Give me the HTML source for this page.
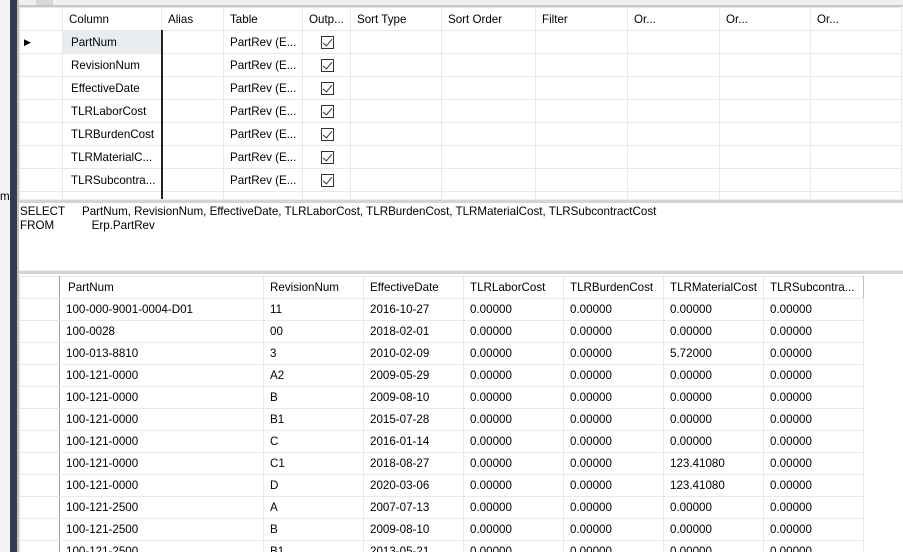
<!DOCTYPE html>
<html style="width:903px;height:552px;overflow:hidden"><head><style>
*{margin:0;padding:0;box-sizing:border-box}
body{width:903px;height:552px;overflow:hidden;background:#fff;font-family:"Liberation Sans",sans-serif;font-size:11.6px;color:#000;position:relative}
.abs{position:absolute}
table{border-collapse:collapse;table-layout:fixed;position:absolute}
td{border:1px solid #e8e8e8;white-space:nowrap;overflow:hidden;padding:0 0 0 6px;vertical-align:middle}
.cb{display:inline-block;width:13px;height:13px;border:1px solid #333;position:relative;margin-left:12px;vertical-align:middle}
.cb:after{content:"";position:absolute;left:3px;top:0px;width:4px;height:8px;border:solid #333;border-width:0 1.5px 1.5px 0;transform:rotate(40deg)}
</style></head><body>
<div class="abs" style="left:0;top:0;width:10px;height:552px;background:#f3f3f3"></div>
<div class="abs" style="left:10px;top:0;width:7px;height:552px;background:#2e3c58"></div>
<div class="abs" style="left:17px;top:0;width:2px;height:552px;background:#bfbfbf"></div>
<div class="abs" style="left:0;top:190px">m</div>
<div class="abs" style="left:19px;top:0;width:884px;height:6px;background:#f0f0f0"></div>
<div class="abs" style="left:36px;top:0;width:17px;height:5px;background:#d8d8d8"></div>
<div class="abs" style="left:19px;top:5px;width:884px;height:2px;background:#c8c8c8"></div>

<div class="abs" style="left:19px;top:7px;width:884px;height:192px;overflow:hidden">
<table style="left:0;top:0">
<colgroup><col style="width:43px"><col style="width:99px"><col style="width:62px"><col style="width:79px"><col style="width:48px"><col style="width:91px"><col style="width:94px"><col style="width:92px"><col style="width:92px"><col style="width:91px"><col style="width:91px"></colgroup>
<tr style="height:23px"><td></td><td>Column</td><td>Alias</td><td>Table</td><td>Outp...</td><td>Sort Type</td><td>Sort Order</td><td>Filter</td><td>Or...</td><td>Or...</td><td>Or...</td></tr>
<tr style="height:23px"><td style="padding-left:4px;font-size:9px">&#9654;</td><td style="background:#e9ecef;border:1px dotted #333;padding-left:8px">PartNum</td><td style="border-left:2px solid #222"></td><td>PartRev (E...</td><td><span class="cb"></span></td><td></td><td></td><td></td><td></td><td></td><td></td></tr>
<tr style="height:23px"><td></td><td style="padding-left:8px">RevisionNum</td><td style="border-left:2px solid #222"></td><td>PartRev (E...</td><td><span class="cb"></span></td><td></td><td></td><td></td><td></td><td></td><td></td></tr>
<tr style="height:23px"><td></td><td style="padding-left:8px">EffectiveDate</td><td style="border-left:2px solid #222"></td><td>PartRev (E...</td><td><span class="cb"></span></td><td></td><td></td><td></td><td></td><td></td><td></td></tr>
<tr style="height:23px"><td></td><td style="padding-left:8px">TLRLaborCost</td><td style="border-left:2px solid #222"></td><td>PartRev (E...</td><td><span class="cb"></span></td><td></td><td></td><td></td><td></td><td></td><td></td></tr>
<tr style="height:23px"><td></td><td style="padding-left:8px">TLRBurdenCost</td><td style="border-left:2px solid #222"></td><td>PartRev (E...</td><td><span class="cb"></span></td><td></td><td></td><td></td><td></td><td></td><td></td></tr>
<tr style="height:23px"><td></td><td style="padding-left:8px">TLRMaterialC...</td><td style="border-left:2px solid #222"></td><td>PartRev (E...</td><td><span class="cb"></span></td><td></td><td></td><td></td><td></td><td></td><td></td></tr>
<tr style="height:23px"><td></td><td style="padding-left:8px">TLRSubcontra...</td><td style="border-left:2px solid #222"></td><td>PartRev (E...</td><td><span class="cb"></span></td><td></td><td></td><td></td><td></td><td></td><td></td></tr>
<tr style="height:23px"><td></td><td></td><td style="border-left:2px solid #222"></td><td></td><td><span class="cb" style="margin-top:14px"></span></td><td></td><td></td><td></td><td></td><td></td><td></td></tr>
</table></div>
<div class="abs" style="left:19px;top:199px;width:884px;height:4px;background:#d4d4d4;border-top:1px solid #ececec"></div>
<div class="abs" style="left:20px;top:205px;line-height:14px">SELECT<br>FROM</div>
<div class="abs" style="left:82px;top:205px;line-height:14px">PartNum, RevisionNum, EffectiveDate, TLRLaborCost, TLRBurdenCost, TLRMaterialCost, TLRSubcontractCost<br>&nbsp;&nbsp;&nbsp;Erp.PartRev</div>
<div class="abs" style="left:19px;top:270px;width:884px;height:4px;background:#d4d4d4;border-top:1px solid #ececec"></div>

<div class="abs" style="left:19px;top:276px;width:884px;height:276px;overflow:hidden">
<table style="left:0;top:0">
<colgroup><col style="width:40px"><col style="width:204px"><col style="width:100px"><col style="width:100px"><col style="width:100px"><col style="width:100px"><col style="width:100px"><col style="width:100px"></colgroup>
<tr style="height:22px;border-bottom:1px solid #a0a0a0"><td style="border-right:1px solid #a0a0a0"></td><td style="padding-left:8px">PartNum</td><td>RevisionNum</td><td>EffectiveDate</td><td>TLRLaborCost</td><td>TLRBurdenCost</td><td>TLRMaterialCost</td><td style="border-right:1px solid #c0c0c0">TLRSubcontra...</td></tr>
<tr style="height:22px"><td style="border-right:1px solid #a0a0a0"></td><td>100-000-9001-0004-D01</td><td>11</td><td>2016-10-27</td><td>0.00000</td><td>0.00000</td><td>0.00000</td><td>0.00000</td></tr>
<tr style="height:22px"><td style="border-right:1px solid #a0a0a0"></td><td>100-0028</td><td>00</td><td>2018-02-01</td><td>0.00000</td><td>0.00000</td><td>0.00000</td><td>0.00000</td></tr>
<tr style="height:22px"><td style="border-right:1px solid #a0a0a0"></td><td>100-013-8810</td><td>3</td><td>2010-02-09</td><td>0.00000</td><td>0.00000</td><td>5.72000</td><td>0.00000</td></tr>
<tr style="height:22px"><td style="border-right:1px solid #a0a0a0"></td><td>100-121-0000</td><td>A2</td><td>2009-05-29</td><td>0.00000</td><td>0.00000</td><td>0.00000</td><td>0.00000</td></tr>
<tr style="height:22px"><td style="border-right:1px solid #a0a0a0"></td><td>100-121-0000</td><td>B</td><td>2009-08-10</td><td>0.00000</td><td>0.00000</td><td>0.00000</td><td>0.00000</td></tr>
<tr style="height:22px"><td style="border-right:1px solid #a0a0a0"></td><td>100-121-0000</td><td>B1</td><td>2015-07-28</td><td>0.00000</td><td>0.00000</td><td>0.00000</td><td>0.00000</td></tr>
<tr style="height:22px"><td style="border-right:1px solid #a0a0a0"></td><td>100-121-0000</td><td>C</td><td>2016-01-14</td><td>0.00000</td><td>0.00000</td><td>0.00000</td><td>0.00000</td></tr>
<tr style="height:22px"><td style="border-right:1px solid #a0a0a0"></td><td>100-121-0000</td><td>C1</td><td>2018-08-27</td><td>0.00000</td><td>0.00000</td><td>123.41080</td><td>0.00000</td></tr>
<tr style="height:22px"><td style="border-right:1px solid #a0a0a0"></td><td>100-121-0000</td><td>D</td><td>2020-03-06</td><td>0.00000</td><td>0.00000</td><td>123.41080</td><td>0.00000</td></tr>
<tr style="height:22px"><td style="border-right:1px solid #a0a0a0"></td><td>100-121-2500</td><td>A</td><td>2007-07-13</td><td>0.00000</td><td>0.00000</td><td>0.00000</td><td>0.00000</td></tr>
<tr style="height:22px"><td style="border-right:1px solid #a0a0a0"></td><td>100-121-2500</td><td>B</td><td>2009-08-10</td><td>0.00000</td><td>0.00000</td><td>0.00000</td><td>0.00000</td></tr>
<tr style="height:22px"><td style="border-right:1px solid #a0a0a0"></td><td>100-121-2500</td><td>B1</td><td>2013-05-21</td><td>0.00000</td><td>0.00000</td><td>0.00000</td><td>0.00000</td></tr>
</table></div>
</body></html>
